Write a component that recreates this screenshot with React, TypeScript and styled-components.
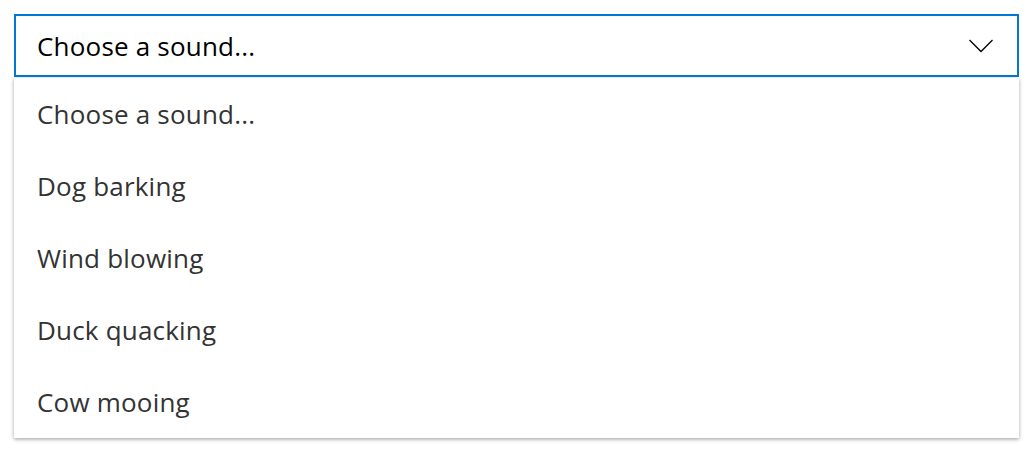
import React from 'react'
import styled, { createGlobalStyle } from 'styled-components'

const GlobalStyle = createGlobalStyle`
  body {
    margin: 0;
    background: #ffffff;
    font-family: 'Open Sans', 'Noto Sans', sans-serif;
  }
`

const Page = styled.div`
  padding: 14px 13px 20px 14px;
  width: 1005px;
`

const SelectBox = styled.div`
  display: flex;
  align-items: center;
  justify-content: space-between;
  height: 63px;
  box-sizing: border-box;
  border: 2px solid #0078d4;
  padding: 0 24px 0 21px;
  font-size: 26px;
  letter-spacing: 0.2px;
  color: #000000;
`

const Menu = styled.ul`
  list-style: none;
  margin: 1px 0 0;
  padding: 0;
  background: #ffffff;
  box-shadow: 0 1px 4px rgba(0, 0, 0, 0.28), 0 2px 3px rgba(0, 0, 0, 0.1);
`

const Option = styled.li`
  display: flex;
  align-items: center;
  height: 72px;
  padding: 0 23px;
  font-size: 26px;
  letter-spacing: 0.2px;
  color: #333333;
`

const sounds = ['Choose a sound...', 'Dog barking', 'Wind blowing', 'Duck quacking', 'Cow mooing']

const Chevron = () => (
  <svg width="24" height="14" viewBox="0 0 24 14" fill="none">
    <path d="M0.5 1 L12 12.5 L23.5 1" stroke="#000" strokeWidth="1.3" />
  </svg>
)

export default function App() {
  return (
    <>
      <GlobalStyle />
      <Page>
        <SelectBox>
          <span>Choose a sound...</span>
          <Chevron />
        </SelectBox>
        <Menu>
          {sounds.map((s) => (
            <Option key={s}>{s}</Option>
          ))}
        </Menu>
      </Page>
    </>
  )
}
